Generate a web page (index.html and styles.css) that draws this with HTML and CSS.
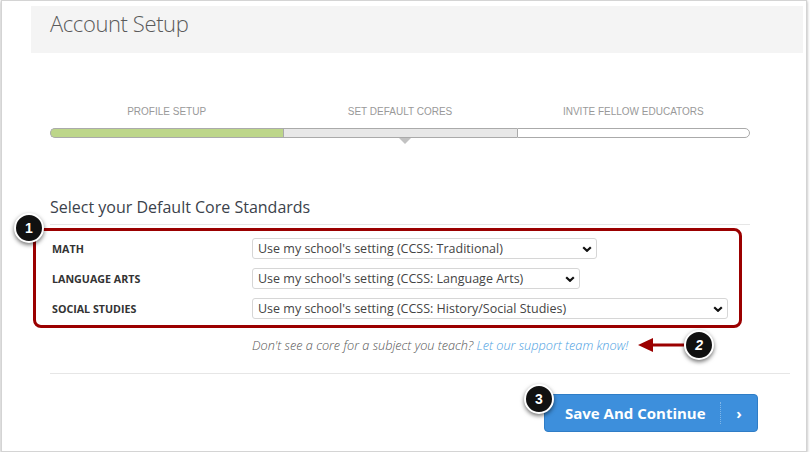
FILE: index.html
```html
<!DOCTYPE html>
<html lang="en">
<head>
  <meta charset="UTF-8">
  <meta name="viewport" content="width=device-width, initial-scale=1.0">
  <title>Account Setup</title>
  <link rel="stylesheet" href="styles.css">
</head>
<body>
  <div class="frame">
    <div class="page-header">
      <h1>Account Setup</h1>
    </div>

    <div class="content">
      <div class="steps">
        <div class="step done">
          <span class="step-label">Profile Setup</span>
          <span class="step-bar"></span>
        </div>
        <div class="step active">
          <span class="step-label">Set Default Cores</span>
          <span class="step-bar"></span>
        </div>
        <div class="step">
          <span class="step-label">Invite Fellow Educators</span>
          <span class="step-bar"></span>
        </div>
      </div>

      <h2 class="section-title">Select your Default Core Standards</h2>

      <div class="core-rows">
        <div class="core-row">
          <label class="core-label">Math</label>
          <div class="fake-select w-math">
            <span>Use my school's setting (CCSS: Traditional)</span>
            <svg class="chevron" viewBox="0 0 10 6" width="10" height="6"><path d="M1.2 1.2 L5 4.8 L8.8 1.2" fill="none" stroke="#111" stroke-width="2.2"/></svg>
          </div>
        </div>
        <div class="core-row">
          <label class="core-label">Language Arts</label>
          <div class="fake-select w-ela">
            <span>Use my school's setting (CCSS: Language Arts)</span>
            <svg class="chevron" viewBox="0 0 10 6" width="10" height="6"><path d="M1.2 1.2 L5 4.8 L8.8 1.2" fill="none" stroke="#111" stroke-width="2.2"/></svg>
          </div>
        </div>
        <div class="core-row">
          <label class="core-label">Social Studies</label>
          <div class="fake-select w-social">
            <span>Use my school's setting (CCSS: History/Social Studies)</span>
            <svg class="chevron" viewBox="0 0 10 6" width="10" height="6"><path d="M1.2 1.2 L5 4.8 L8.8 1.2" fill="none" stroke="#111" stroke-width="2.2"/></svg>
          </div>
        </div>

        <!-- annotation -->
        <div class="callout">
          <span class="badge badge-1">1</span>
        </div>
      </div>

      <p class="helper">
        <span>Don't see a core for a subject you teach? <a href="#">Let our support team know!</a></span>
        <svg class="arrow" viewBox="0 0 46 18" width="46" height="18">
          <path d="M0 9 L15 2 L15 16 Z" fill="#9b0000"/>
          <path d="M14 9 L46 9" stroke="#9b0000" stroke-width="3"/>
        </svg>
        <span class="badge">2</span>
      </p>
    </div>

    <div class="footer">
      <button class="save-btn">
        <span class="badge badge-3">3</span>
        <span class="save-text">Save And Continue</span>
        <span class="save-arrow">&rsaquo;</span>
      </button>
    </div>
  </div>
</body>
</html>
```

FILE: styles.css
```css
body {
  margin: 0;
  font-family: "Open Sans", "DejaVu Sans", sans-serif;
  background-color: #fff;
}
.frame {
  margin-left: 1px;
  width: 804px;
  height: 450px;
  border: 1px solid #d4d4d4;
  box-shadow: 0 1px 3px rgba(0, 0, 0, 0.35);
  overflow: hidden;
}
.page-header {
  margin: 5px 3px 0 29px;
  height: 47px;
  padding-left: 19px;
  background-color: #f4f4f4;
}
.page-header h1 {
  margin: 0;
  font-size: 22px;
  font-weight: 300;
  letter-spacing: -0.4px;
  color: #5a5a5a;
  line-height: 35px;
}
.content {
  margin-left: 48px;
  width: 700px;
}
.steps {
  display: flex;
  margin-top: 53px;
}
.step {
  flex: 1;
  display: flex;
  flex-direction: column;
  align-items: center;
  position: relative;
}
.step-label {
  font-family: "Liberation Sans", Arial, sans-serif;
  font-size: 10px;
  text-transform: uppercase;
  color: #999;
  line-height: 12px;
}
.step-bar {
  align-self: stretch;
  margin-top: 10px;
  height: 8px;
  border: 1px solid #aaa;
  border-right: none;
  background-color: #fff;
}
.step.done .step-bar {
  background-color: #bdd68a;
  border-radius: 5px 0 0 5px;
}
.step.active .step-bar {
  background-color: #e8e8e8;
}
.step:last-child .step-bar {
  border-right: 1px solid #aaa;
  border-radius: 0 5px 5px 0;
}
.step.active::after {
  content: "";
  position: absolute;
  left: 50%;
  bottom: -6px;
  margin-left: -1px;
  border-left: 6px solid transparent;
  border-right: 6px solid transparent;
  border-top: 6px solid #c2c2c2;
}
.section-title {
  margin: 58px 0 0;
  padding-bottom: 6px;
  font-size: 16px;
  font-weight: 400;
  color: #3b424b;
  line-height: 22px;
  border-bottom: 1px solid #e6e6e6;
}
.core-rows {
  position: relative;
  margin-top: 13px;
  display: flex;
  flex-direction: column;
  gap: 9px;
}
.core-row {
  display: flex;
  align-items: center;
}
.core-label {
  width: 200px;
  padding-left: 2px;
  font-size: 10.7px;
  font-weight: 700;
  text-transform: uppercase;
  color: #333;
}
.fake-select {
  display: flex;
  align-items: center;
  justify-content: space-between;
  box-sizing: border-box;
  height: 21px;
  padding: 0 4px 0 5px;
  border: 1px solid #d6d6d6;
  border-radius: 3px;
  font-size: 12.5px;
  color: #444;
  background-color: #fff;
}
.w-math { width: 345px; }
.w-ela { width: 328px; }
.w-social { width: 476px; }
.chevron {
  flex-shrink: 0;
}
.callout {
  position: absolute;
  top: -10px;
  left: -17px;
  right: 8px;
  bottom: -9px;
  border: 3px solid #9b0000;
  border-radius: 8px;
}
.badge {
  display: inline-flex;
  align-items: center;
  justify-content: center;
  box-sizing: border-box;
  width: 30px;
  height: 30px;
  border: 2px solid #fff;
  border-radius: 50%;
  background-color: #111;
  color: #fff;
  font-family: "Liberation Sans", Arial, sans-serif;
  font-size: 14px;
  font-weight: 700;
  box-shadow: 0 2px 4px rgba(0, 0, 0, 0.55);
  flex-shrink: 0;
}
.badge-1 {
  position: absolute;
  left: -22px;
  top: -18px;
}
.helper {
  display: flex;
  align-items: center;
  height: 30px;
  margin: 11px 0 13px;
  padding-left: 202px;
  font-size: 12.7px;
  font-weight: 300;
  font-style: italic;
  color: #555;
  white-space: nowrap;
}
.helper a {
  color: #4a9ee2;
  text-decoration: none;
}
.arrow {
  margin-left: 10px;
  flex-shrink: 0;
}
.footer {
  margin-left: 48px;
  width: 740px;
  border-top: 1px solid #e6e6e6;
  display: flex;
  justify-content: flex-end;
  padding-top: 20px;
}
.save-btn {
  position: relative;
  display: flex;
  align-items: center;
  margin-right: 32px;
  width: 214px;
  height: 38px;
  padding: 0;
  border: 1px solid #2f7dc6;
  border-radius: 4px;
  background-color: #3d8fdc;
  color: #fff;
  font-family: "Open Sans", sans-serif;
  cursor: pointer;
}
.save-text {
  flex: 1;
  padding-left: 20px;
  text-align: left;
  font-size: 15px;
  font-weight: 700;
  border-right: 1px dotted rgba(255, 255, 255, 0.35);
  line-height: 22px;
}
.save-arrow {
  width: 36px;
  text-align: center;
  font-size: 15px;
  font-weight: 700;
  line-height: 22px;
}
.badge-3 {
  position: absolute;
  left: -21px;
  top: -11px;
}
```
